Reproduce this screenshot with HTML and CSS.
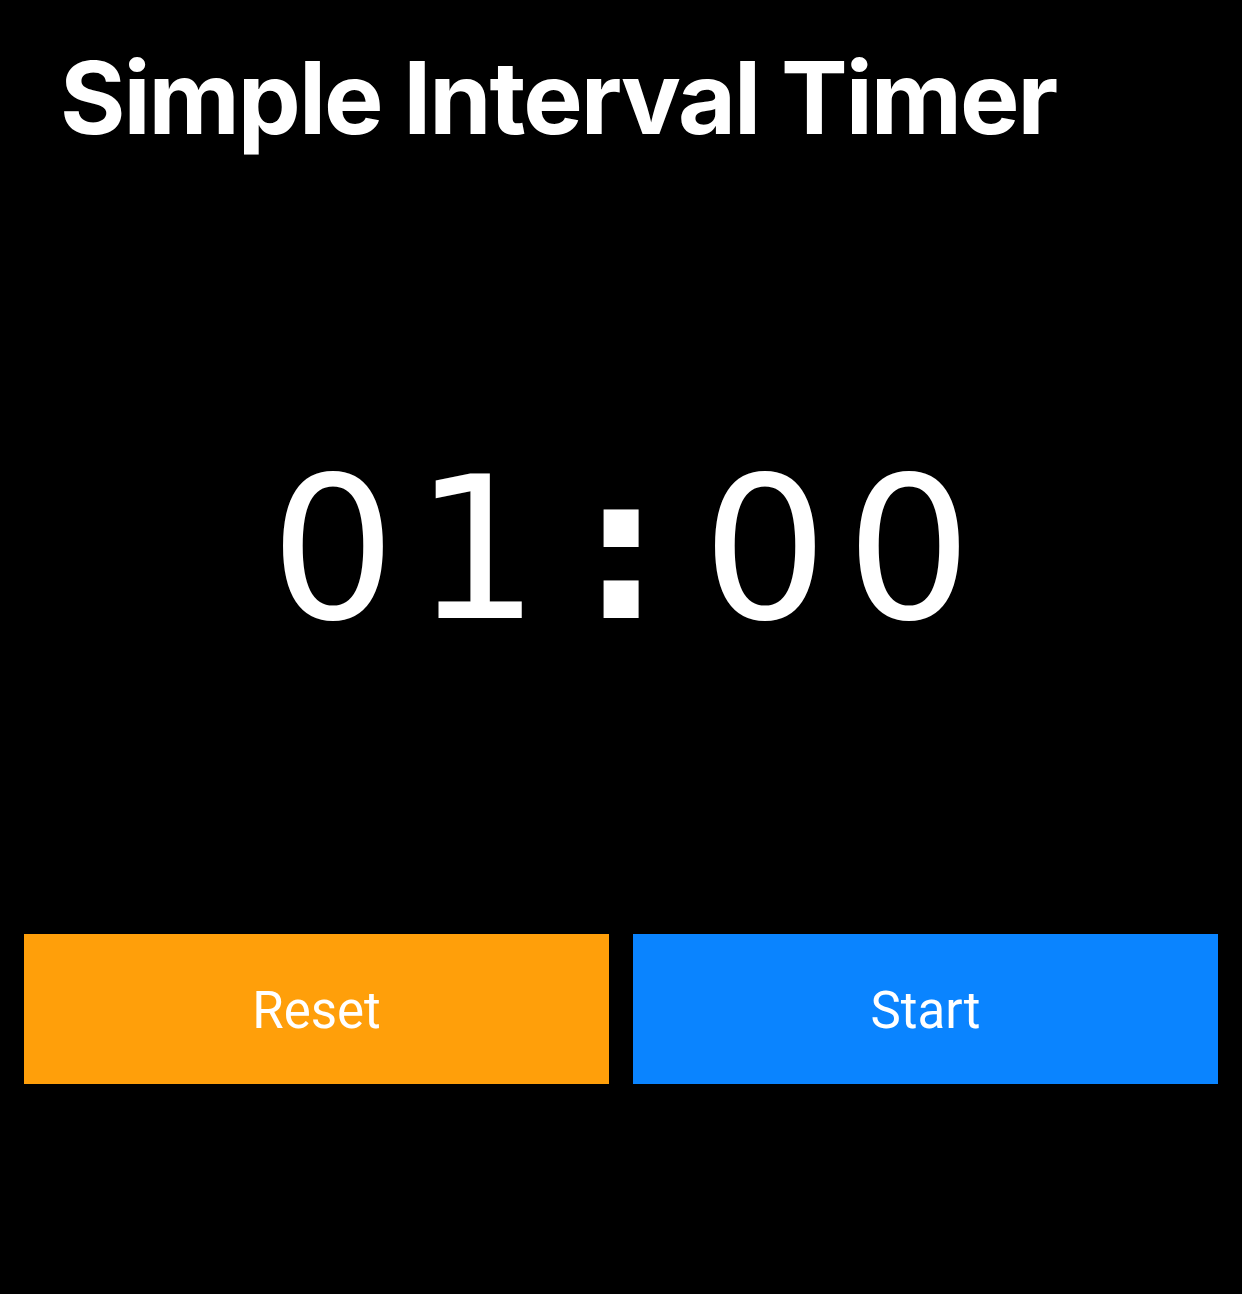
FILE: index.html
```html
<!DOCTYPE html>
<html lang="en">
<head>
<meta charset="utf-8">
<title>Simple Interval Timer</title>
<link rel="stylesheet" href="styles.css">
</head>
<body>
<main class="app">
  <h1 class="title">Simple Interval Timer</h1>
  <div class="display" aria-label="01:00"><span class="cell">0</span><span class="cell">1</span><span class="cell colon">:</span><span class="cell">0</span><span class="cell">0</span></div>
  <div class="controls">
    <button class="btn btn-reset" type="button">Reset</button>
    <button class="btn btn-start" type="button">Start</button>
  </div>
</main>
</body>
</html>
```

FILE: styles.css
```css
html, body {
  margin: 0;
  padding: 0;
  background: #000;
}

.app {
  display: flex;
  flex-direction: column;
  height: 1294px;
}

.title {
  margin: 0;
  padding: 38px 0 0 60px;
  font-family: Inter, "Liberation Sans", sans-serif;
  font-weight: 700;
  font-size: 100px;
  line-height: 120px;
  color: #fff;
  letter-spacing: -2px;
}

.display {
  margin-top: 274px;
  display: flex;
  justify-content: center;
  font-family: "DejaVu Sans", sans-serif;
  font-size: 198px;
  line-height: 235px;
  color: #fff;
}

.cell {
  width: 144px;
  text-align: center;
}

.colon {
  font-weight: 700;
}

.controls {
  display: flex;
  gap: 24px;
  padding: 0 24px;
  margin-top: 267px;
}

.btn {
  flex: 1;
  height: 150px;
  border: 0;
  border-radius: 0;
  margin: 0;
  padding: 2px 0 0;
  color: #fff;
  font-family: Roboto, "Liberation Sans", sans-serif;
  font-size: 51px;
  font-weight: 400;
  cursor: pointer;
}

.btn-reset {
  background: #ff9f0a;
}

.btn-start {
  background: #0a84ff;
}
```
